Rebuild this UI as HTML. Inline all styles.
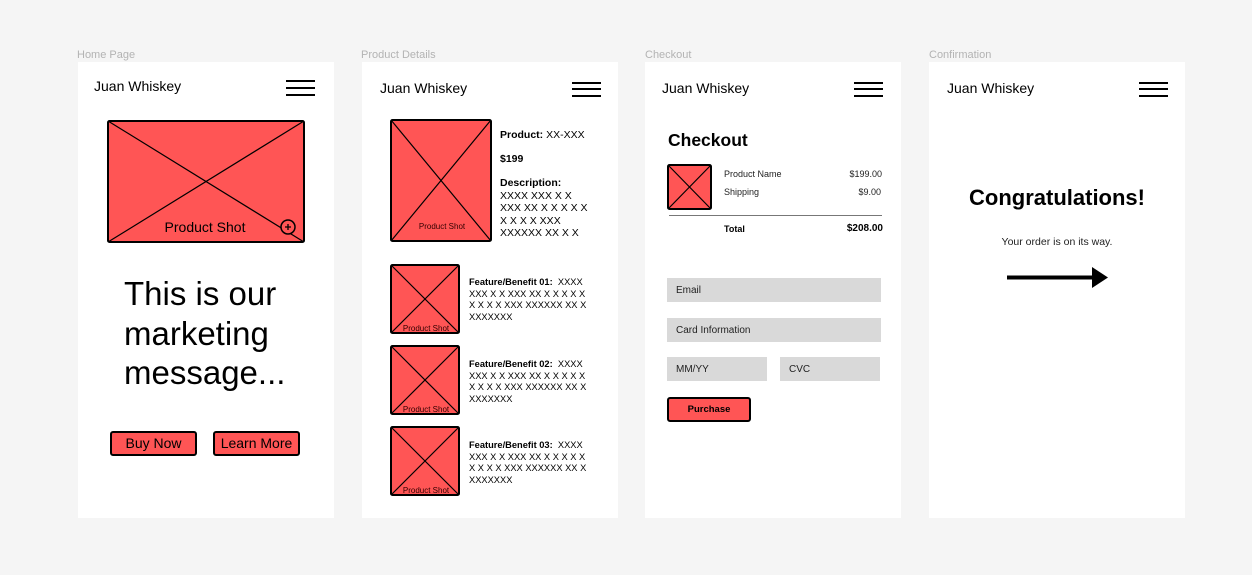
<!DOCTYPE html><html><head><style>
body{margin:0;width:1252px;height:575px;background:#f5f5f5;font-family:"Liberation Sans",sans-serif;position:relative;overflow:hidden;color:#000}
.a{position:absolute;white-space:nowrap}
.lbl{font-size:11px;color:#b3b3b3}
.fr{position:absolute;top:62px;width:256px;height:456px;background:#fff}
.hb{position:absolute;width:29px;height:2px;background:#000}
.in{position:absolute;background:#d9d9d9;font-size:10px;color:#222;line-height:26px;height:24px;box-sizing:border-box;padding-left:9px}
.btn{position:absolute;background:#ff5555;border:2px solid #000;border-radius:3px;box-sizing:border-box;text-align:center}
.t{font-size:10px;line-height:11.5px;white-space:normal}
</style></head><body>
<div class="a lbl" style="left:77px;top:49px">Home Page</div>
<div class="a lbl" style="left:361px;top:49px">Product Details</div>
<div class="a lbl" style="left:645px;top:49px">Checkout</div>
<div class="a lbl" style="left:929px;top:49px">Confirmation</div>
<div class="fr" style="left:78px"></div>
<div class="fr" style="left:362px"></div>
<div class="fr" style="left:645px"></div>
<div class="fr" style="left:929px"></div>

<!-- Home -->
<div class="a" style="left:94px;top:78px;font-size:14px">Juan Whiskey</div>
<div class="hb" style="left:286px;top:80px"></div><div class="hb" style="left:286px;top:87px"></div><div class="hb" style="left:286px;top:94px"></div>
<svg class="a" style="left:107px;top:120px" width="198" height="123"><rect x="1" y="1" width="196" height="121" rx="1.5" fill="#ff5555" stroke="#000" stroke-width="2"/><line x1="1" y1="1" x2="197" y2="122" stroke="#000" stroke-width="1.2"/><line x1="197" y1="1" x2="1" y2="122" stroke="#000" stroke-width="1.2"/><text x="98" y="112" font-size="14" text-anchor="middle" font-family="Liberation Sans">Product Shot</text><circle cx="181" cy="107" r="7" fill="#ff5555" stroke="#000" stroke-width="1.5"/><path d="M178 107h6M181 104v6" stroke="#000" stroke-width="1.3"/></svg>
<div class="a" style="left:124px;top:274px;font-size:33px;line-height:39.5px">This is our<br>marketing<br>message...</div>
<div class="btn" style="left:110px;top:431px;width:87px;height:25px;font-size:14px;line-height:21px">Buy Now</div>
<div class="btn" style="left:213px;top:431px;width:87px;height:25px;font-size:14px;line-height:21px">Learn More</div>

<!-- Product -->
<div class="a" style="left:380px;top:80px;font-size:14px">Juan Whiskey</div>
<div class="hb" style="left:572px;top:82px"></div><div class="hb" style="left:572px;top:88px"></div><div class="hb" style="left:572px;top:95px"></div>
<svg class="a" style="left:390px;top:119px" width="102" height="123"><rect x="1" y="1" width="100" height="121" rx="1.5" fill="#ff5555" stroke="#000" stroke-width="2"/><line x1="1" y1="1" x2="101" y2="122" stroke="#000" stroke-width="1.2"/><line x1="101" y1="1" x2="1" y2="122" stroke="#000" stroke-width="1.2"/><text x="52" y="110" font-size="8" text-anchor="middle" font-family="Liberation Sans" fill="#300">Product Shot</text></svg>
<div class="a" style="left:500px;top:129px;font-size:10.5px"><b>Product:</b> XX-XXX</div>
<div class="a" style="left:500px;top:153px;font-size:10.5px"><b>$199</b></div>
<div class="a t" style="left:500px;top:177px;width:95px;font-size:10.5px;line-height:12.5px"><b>Description:</b><br>XXXX XXX X X XXX XX X X X X X X X X X XXX XXXXXX XX X X</div>
<svg class="a" style="left:390px;top:264px" width="70" height="70"><rect x="1" y="1" width="68" height="68" rx="1.5" fill="#ff5555" stroke="#000" stroke-width="2"/><line x1="1" y1="1" x2="69" y2="69" stroke="#000" stroke-width="1.2"/><line x1="69" y1="1" x2="1" y2="69" stroke="#000" stroke-width="1.2"/><text x="36" y="67" font-size="8" text-anchor="middle" font-family="Liberation Sans" fill="#300">Product Shot</text></svg>
<svg class="a" style="left:390px;top:345px" width="70" height="70"><rect x="1" y="1" width="68" height="68" rx="1.5" fill="#ff5555" stroke="#000" stroke-width="2"/><line x1="1" y1="1" x2="69" y2="69" stroke="#000" stroke-width="1.2"/><line x1="69" y1="1" x2="1" y2="69" stroke="#000" stroke-width="1.2"/><text x="36" y="67" font-size="8" text-anchor="middle" font-family="Liberation Sans" fill="#300">Product Shot</text></svg>
<svg class="a" style="left:390px;top:426px" width="70" height="70"><rect x="1" y="1" width="68" height="68" rx="1.5" fill="#ff5555" stroke="#000" stroke-width="2"/><line x1="1" y1="1" x2="69" y2="69" stroke="#000" stroke-width="1.2"/><line x1="69" y1="1" x2="1" y2="69" stroke="#000" stroke-width="1.2"/><text x="36" y="67" font-size="8" text-anchor="middle" font-family="Liberation Sans" fill="#300">Product Shot</text></svg>
<div class="a t" style="left:469px;top:277px;width:122px;font-size:9.3px"><b>Feature/Benefit 01:</b>&nbsp; XXXX XXX X X XXX XX X X X X X X X X X XXX XXXXXX XX X XXXXXXX</div>
<div class="a t" style="left:469px;top:359px;width:122px;font-size:9.3px"><b>Feature/Benefit 02:</b>&nbsp; XXXX XXX X X XXX XX X X X X X X X X X XXX XXXXXX XX X XXXXXXX</div>
<div class="a t" style="left:469px;top:440px;width:122px;font-size:9.3px"><b>Feature/Benefit 03:</b>&nbsp; XXXX XXX X X XXX XX X X X X X X X X X XXX XXXXXX XX X XXXXXXX</div>

<!-- Checkout -->
<div class="a" style="left:662px;top:80px;font-size:14px">Juan Whiskey</div>
<div class="hb" style="left:854px;top:82px"></div><div class="hb" style="left:854px;top:88px"></div><div class="hb" style="left:854px;top:95px"></div>
<div class="a" style="left:668px;top:130px;font-size:17.5px;font-weight:bold">Checkout</div>
<svg class="a" style="left:667px;top:164px" width="45" height="46"><rect x="1" y="1" width="43" height="44" rx="1.5" fill="#ff5555" stroke="#000" stroke-width="2"/><line x1="1" y1="1" x2="44" y2="45" stroke="#000" stroke-width="1.2"/><line x1="44" y1="1" x2="1" y2="45" stroke="#000" stroke-width="1.2"/></svg>
<div class="a" style="left:724px;top:169px;font-size:9px;color:#222">Product Name</div>
<div class="a" style="right:370px;top:169px;font-size:9px;color:#222">$199.00</div>
<div class="a" style="left:724px;top:187px;font-size:9px;color:#222">Shipping</div>
<div class="a" style="right:371px;top:187px;font-size:9px;color:#222">$9.00</div>
<div class="a" style="left:669px;top:215px;width:213px;height:1px;background:#777"></div>
<div class="a" style="left:724px;top:224px;font-size:9px;font-weight:bold">Total</div>
<div class="a" style="right:369px;top:223px;font-size:10px;font-weight:bold">$208.00</div>
<div class="in" style="left:667px;top:278px;width:214px">Email</div>
<div class="in" style="left:667px;top:318px;width:214px">Card Information</div>
<div class="in" style="left:667px;top:357px;width:100px">MM/YY</div>
<div class="in" style="left:780px;top:357px;width:100px">CVC</div>
<div class="btn" style="left:667px;top:397px;width:84px;height:25px;font-size:9.5px;font-weight:bold;line-height:22px">Purchase</div>

<!-- Confirmation -->
<div class="a" style="left:947px;top:80px;font-size:14px">Juan Whiskey</div>
<div class="hb" style="left:1139px;top:82px"></div><div class="hb" style="left:1139px;top:88px"></div><div class="hb" style="left:1139px;top:95px"></div>
<div class="a" style="left:929px;width:256px;text-align:center;top:185px;font-size:22px;font-weight:bold">Congratulations!</div>
<div class="a" style="left:929px;width:256px;text-align:center;top:236px;font-size:10.5px;color:#222">Your order is on its way.</div>
<svg class="a" style="left:1006px;top:266px" width="104" height="24"><rect x="1" y="9.5" width="86" height="4" fill="#000"/><path d="M86 1L102 11.5L86 22Z" fill="#000"/></svg>
</body></html>
